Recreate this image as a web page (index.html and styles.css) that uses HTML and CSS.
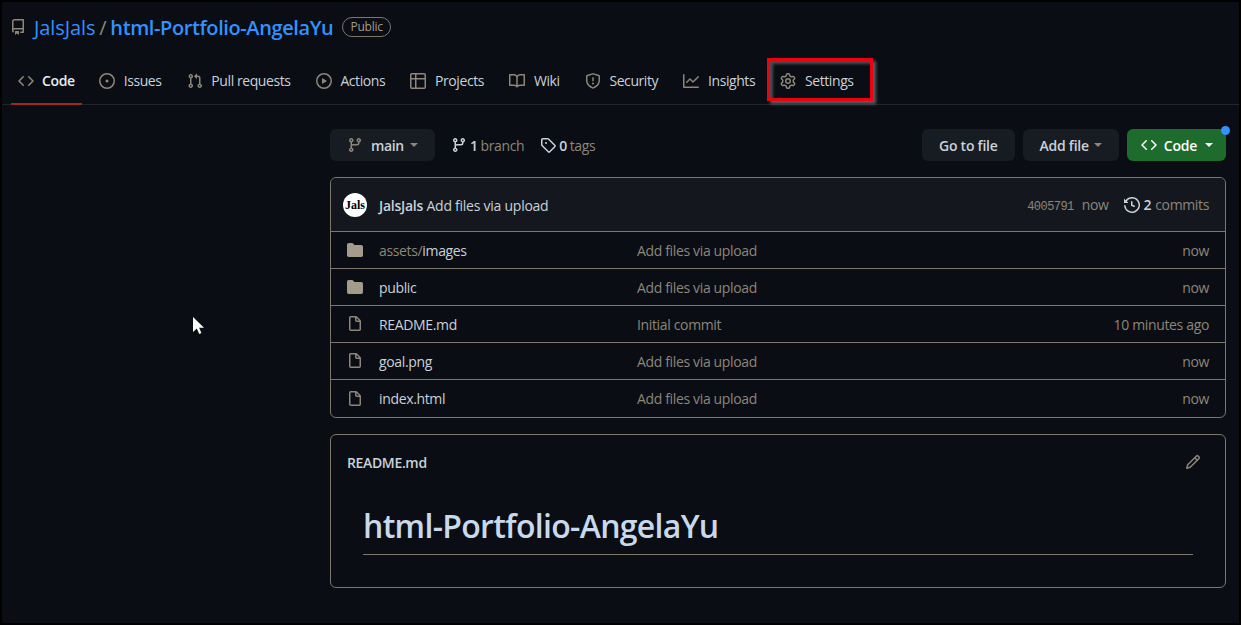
FILE: index.html
```html
<!DOCTYPE html>
<html lang="en">
<head>
    <meta charset="UTF-8">
    <meta name="viewport" content="width=device-width, initial-scale=1.0">
    <title>JalsJals/html-Portfolio-AngelaYu</title>
    <link rel="stylesheet" href="styles.css">
</head>
<body>
    <svg class="sprites" width="0" height="0">
        <symbol id="i-repo" viewBox="0 0 16 16"><path d="M2 2.5A2.5 2.5 0 014.5 0h8.75a.75.75 0 01.75.75v12.5a.75.75 0 01-.75.75h-2.5a.75.75 0 110-1.5h1.75v-2h-8a1 1 0 00-.714 1.7.75.75 0 01-1.072 1.05A2.495 2.495 0 012 11.5v-9zm10.5-1V9h-8c-.356 0-.694.074-1 .208V2.5a1 1 0 011-1h8zM5 12.25v3.25a.25.25 0 00.4.2l1.45-1.087a.25.25 0 01.3 0L8.6 15.7a.25.25 0 00.4-.2v-3.25a.25.25 0 00-.25-.25h-3.5a.25.25 0 00-.25.25z"/></symbol>
        <symbol id="i-code" viewBox="0 0 16 16"><path d="M4.72 3.22a.75.75 0 011.06 1.06L2.06 8l3.72 3.72a.75.75 0 11-1.06 1.06L.47 8.53a.75.75 0 010-1.06l4.25-4.25zm6.56 0a.75.75 0 10-1.06 1.06L13.94 8l-3.72 3.72a.75.75 0 101.06 1.06l4.25-4.25a.75.75 0 000-1.06l-4.25-4.25z"/></symbol>
        <symbol id="i-issue" viewBox="0 0 16 16"><path d="M8 9.5a1.5 1.5 0 100-3 1.5 1.5 0 000 3z"/><path d="M8 0a8 8 0 100 16A8 8 0 008 0zM1.5 8a6.5 6.5 0 1113 0 6.5 6.5 0 01-13 0z"/></symbol>
        <symbol id="i-pull" viewBox="0 0 16 16"><path d="M7.177 3.073L9.573.677A.25.25 0 0110 .854v4.792a.25.25 0 01-.427.177L7.177 3.427a.25.25 0 010-.354zM3.75 2.5a.75.75 0 100 1.5.75.75 0 000-1.5zm-2.25.75a2.25 2.25 0 113 2.122v5.256a2.251 2.251 0 11-1.5 0V5.372A2.25 2.25 0 011.5 3.25zM11 2.5h-1V4h1a1 1 0 011 1v5.628a2.251 2.251 0 101.5 0V5A2.5 2.5 0 0011 2.5zm1 10.25a.75.75 0 111.5 0 .75.75 0 01-1.5 0zM3.75 12a.75.75 0 100 1.5.75.75 0 000-1.5z"/></symbol>
        <symbol id="i-play" viewBox="0 0 16 16"><path d="M1.5 8a6.5 6.5 0 1113 0 6.5 6.5 0 01-13 0zM8 0a8 8 0 100 16A8 8 0 008 0zM6.379 5.227A.25.25 0 006 5.442v5.117a.25.25 0 00.379.214l4.264-2.559a.25.25 0 000-.428L6.379 5.227z"/></symbol>
        <symbol id="i-table" viewBox="0 0 16 16"><path d="M0 1.75C0 .784.784 0 1.75 0h12.5C15.216 0 16 .784 16 1.75v12.5A1.75 1.75 0 0114.25 16H1.75A1.75 1.75 0 010 14.25V1.75zM1.5 6.5v7.75c0 .138.112.25.25.25H5v-8H1.5zM5 5H1.5V1.75a.25.25 0 01.25-.25H5V5zm1.5 1.5v8h7.75a.25.25 0 00.25-.25V6.5h-8zm8-1.5h-8V1.5h7.75a.25.25 0 01.25.25V5z"/></symbol>
        <symbol id="i-book" viewBox="0 0 16 16"><path d="M0 1.75A.75.75 0 01.75 1h4.253c1.227 0 2.317.59 3 1.501A3.744 3.744 0 0111.006 1h4.245a.75.75 0 01.75.75v10.5a.75.75 0 01-.75.75h-4.507a2.25 2.25 0 00-1.591.659l-.622.621a.75.75 0 01-1.06 0l-.622-.621A2.25 2.25 0 005.258 13H.75a.75.75 0 01-.75-.75V1.75zm8.755 3a2.25 2.25 0 012.25-2.25H14.5v9h-3.757c-.71 0-1.4.201-1.992.572l.004-7.322zm-1.504 7.324l.004-5.073-.002-2.253A2.25 2.25 0 005.003 2.5H1.5v9h3.757a3.75 3.75 0 011.994.574z"/></symbol>
        <symbol id="i-shield" viewBox="0 0 16 16"><path d="M7.467.133a1.75 1.75 0 011.066 0l5.25 1.68A1.75 1.75 0 0115 3.48V7c0 1.566-.32 3.182-1.303 4.682-.983 1.498-2.585 2.813-5.032 3.855a1.7 1.7 0 01-1.33 0c-2.447-1.042-4.049-2.357-5.032-3.855C1.32 10.182 1 8.566 1 7V3.48a1.75 1.75 0 011.217-1.667l5.25-1.68zm.61 1.429a.25.25 0 00-.153 0l-5.25 1.68a.25.25 0 00-.174.238V7c0 1.358.275 2.666 1.057 3.86.784 1.194 2.121 2.34 4.366 3.297a.2.2 0 00.154 0c2.245-.956 3.582-2.104 4.366-3.298C13.225 9.666 13.5 8.36 13.5 7V3.48a.25.25 0 00-.174-.237l-5.25-1.68zM9 10.5a1 1 0 11-2 0 1 1 0 012 0zm-.25-5.75a.75.75 0 10-1.5 0v3a.75.75 0 001.5 0v-3z"/></symbol>
        <symbol id="i-graph" viewBox="0 0 16 16"><path d="M1.5 1.75a.75.75 0 00-1.5 0v12.5c0 .414.336.75.75.75h14.5a.75.75 0 000-1.5H1.5V1.750zm14.28 2.53a.75.75 0 00-1.06-1.06L10 7.94 7.53 5.47a.75.75 0 00-1.06 0L3.22 8.72a.75.75 0 001.06 1.06L7 7.06l2.47 2.47a.75.75 0 001.06 0l5.25-5.25z"/></symbol>
        <symbol id="i-gear" viewBox="0 0 16 16"><path d="M7.429 1.525a6.593 6.593 0 011.142 0c.036.003.108.036.137.146l.289 1.105c.147.56.55.967.997 1.189.174.086.341.183.501.29.417.278.97.423 1.53.27l1.102-.303c.11-.03.175.016.195.046.219.31.41.641.573.989.014.031.022.11-.059.19l-.815.806c-.411.406-.562.957-.53 1.456a4.588 4.588 0 010 .582c-.032.499.119 1.05.53 1.456l.815.806c.08.08.073.159.059.19a6.494 6.494 0 01-.573.99c-.02.029-.086.074-.195.045l-1.103-.303c-.559-.153-1.112-.008-1.529.27-.16.107-.327.204-.5.29-.449.222-.851.628-.998 1.189l-.289 1.105c-.029.11-.101.143-.137.146a6.613 6.613 0 01-1.142 0c-.036-.003-.108-.037-.137-.146l-.289-1.105c-.147-.56-.55-.967-.997-1.189a4.502 4.502 0 01-.501-.29c-.417-.278-.97-.423-1.53-.27l-1.102.303c-.11.03-.175-.016-.195-.046a6.492 6.492 0 01-.573-.989c-.014-.031-.022-.11.059-.19l.815-.806c.411-.406.562-.957.53-1.456a4.587 4.587 0 010-.582c.032-.499-.119-1.05-.53-1.456l-.815-.806c-.08-.08-.073-.159-.059-.19a6.44 6.44 0 01.573-.99c.02-.029.086-.075.195-.045l1.103.303c.559.153 1.112.008 1.529-.27.16-.107.327-.204.5-.29.449-.222.851-.628.998-1.189l.289-1.105c.029-.11.101-.143.137-.146zM8 0c-.236 0-.47.01-.701.03-.743.065-1.29.615-1.458 1.261l-.29 1.106c-.017.066-.078.158-.211.224a5.994 5.994 0 00-.668.386c-.123.082-.233.09-.3.071L3.27 2.776c-.644-.177-1.392.02-1.82.63a7.977 7.977 0 00-.704 1.217c-.315.675-.111 1.422.363 1.891l.815.806c.05.048.098.147.088.294a6.084 6.084 0 000 .772c.01.147-.038.246-.088.294l-.815.806c-.474.469-.678 1.216-.363 1.891.2.428.436.835.704 1.218.428.609 1.176.806 1.82.63l1.103-.303c.066-.019.176-.011.299.071.213.143.436.272.668.386.133.066.194.158.212.224l.289 1.106c.169.646.715 1.196 1.458 1.26a8.094 8.094 0 001.402 0c.743-.064 1.29-.614 1.458-1.26l.29-1.106c.017-.066.078-.158.211-.224a5.98 5.98 0 00.668-.386c.123-.082.233-.09.3-.071l1.102.302c.644.177 1.392-.02 1.82-.63.268-.382.505-.789.704-1.217.315-.675.111-1.422-.364-1.891l-.814-.806c-.05-.048-.098-.147-.088-.294a6.1 6.1 0 000-.772c-.01-.147.039-.246.088-.294l.814-.806c.475-.469.679-1.216.364-1.891a7.992 7.992 0 00-.704-1.218c-.428-.609-1.176-.806-1.82-.63l-1.103.303c-.066.019-.176.011-.299-.071a5.991 5.991 0 00-.668-.386c-.133-.066-.194-.158-.212-.224L10.16 1.29C9.99.645 9.444.095 8.701.031A8.094 8.094 0 008 0zm1.5 8a1.5 1.5 0 11-3 0 1.5 1.5 0 013 0zM11 8a3 3 0 11-6 0 3 3 0 016 0z"/></symbol>
        <symbol id="i-branch" viewBox="0 0 16 16"><path d="M11.75 2.5a.75.75 0 100 1.5.75.75 0 000-1.5zm-2.25.75a2.25 2.25 0 113 2.122V6A2.5 2.5 0 0110 8.5H6a1 1 0 00-1 1v1.128a2.251 2.251 0 11-1.5 0V5.372a2.25 2.25 0 111.5 0v1.836A2.492 2.492 0 016 7h4a1 1 0 001-1v-.628A2.25 2.25 0 019.5 3.25zM4.25 12a.75.75 0 100 1.5.75.75 0 000-1.5zM3.5 3.25a.75.75 0 111.5 0 .75.75 0 01-1.5 0z"/></symbol>
        <symbol id="i-tag" viewBox="0 0 16 16"><path d="M2.5 7.775V2.75a.25.25 0 01.25-.25h5.025a.25.25 0 01.177.073l6.25 6.25a.25.25 0 010 .354l-5.025 5.025a.25.25 0 01-.354 0l-6.25-6.25a.25.25 0 01-.073-.177zm-1.5 0V2.75C1 1.784 1.784 1 2.75 1h5.025c.464 0 .91.184 1.238.513l6.25 6.25a1.75 1.75 0 010 2.474l-5.026 5.026a1.75 1.75 0 01-2.474 0l-6.25-6.25A1.75 1.75 0 011 7.775zM6 5a1 1 0 100 2 1 1 0 000-2z"/></symbol>
        <symbol id="i-history" viewBox="0 0 16 16"><path d="M1.643 3.143L.427 1.927A.25.25 0 000 2.104V5.75c0 .138.112.25.25.25h3.646a.25.25 0 00.177-.427L2.715 4.215a6.5 6.5 0 11-1.18 4.458.75.75 0 10-1.493.154 8.001 8.001 0 101.6-5.684zM7.75 4a.75.75 0 01.75.75v2.992l2.028.812a.75.75 0 01-.557 1.392l-2.5-1A.75.75 0 017 8.25v-3.5A.75.75 0 017.75 4z"/></symbol>
        <symbol id="i-folder" viewBox="0 0 16 16"><path d="M1.75 1A1.75 1.75 0 000 2.75v10.5C0 14.216.784 15 1.75 15h12.5A1.75 1.75 0 0016 13.25v-8.5A1.75 1.75 0 0014.25 3H7.5a.25.25 0 01-.2-.1l-.9-1.2C6.07 1.26 5.55 1 5 1H1.75z"/></symbol>
        <symbol id="i-file" viewBox="0 0 16 16"><path d="M3.75 1.5a.25.25 0 00-.25.25v11.5c0 .138.112.25.25.25h8.5a.25.25 0 00.25-.25V6H9.75A1.75 1.75 0 018 4.25V1.5H3.75zm5.75.56v2.19c0 .138.112.25.25.25h2.19L9.5 2.06zM2 1.75C2 .784 2.784 0 3.75 0h5.086c.464 0 .909.184 1.237.513l3.414 3.414c.329.328.513.773.513 1.237v8.086A1.75 1.75 0 0112.25 15h-8.5A1.75 1.75 0 012 13.25V1.75z"/></symbol>
        <symbol id="i-pencil" viewBox="0 0 16 16"><path d="M11.013 1.427a1.75 1.75 0 012.474 0l1.086 1.086a1.75 1.75 0 010 2.474l-8.61 8.61c-.21.21-.47.364-.756.445l-3.251.93a.75.75 0 01-.927-.928l.929-3.25a1.75 1.75 0 01.445-.758l8.61-8.61zm1.414 1.06a.25.25 0 00-.354 0L10.811 3.75l1.439 1.44 1.263-1.263a.25.25 0 000-.354l-1.086-1.086zM11.189 6.25L9.75 4.81l-6.286 6.287a.25.25 0 00-.064.108l-.558 1.953 1.953-.558a.249.249 0 00.108-.064l6.286-6.286z"/></symbol>
    </svg>

    <div class="frame">
        <header class="repo-head">
            <div class="repo-title">
                <svg class="icon"><use href="#i-repo"/></svg>
                <a class="owner">JalsJals</a>
                <span class="slash">/</span>
                <a class="name">html-Portfolio-AngelaYu</a>
                <span class="badge">Public</span>
            </div>
            <nav class="tabs">
                <a class="tab active"><svg class="icon"><use href="#i-code"/></svg>Code</a>
                <a class="tab"><svg class="icon"><use href="#i-issue"/></svg>Issues</a>
                <a class="tab"><svg class="icon"><use href="#i-pull"/></svg>Pull requests</a>
                <a class="tab"><svg class="icon"><use href="#i-play"/></svg>Actions</a>
                <a class="tab"><svg class="icon"><use href="#i-table"/></svg>Projects</a>
                <a class="tab"><svg class="icon"><use href="#i-book"/></svg>Wiki</a>
                <a class="tab"><svg class="icon"><use href="#i-shield"/></svg>Security</a>
                <a class="tab"><svg class="icon"><use href="#i-graph"/></svg>Insights</a>
                <a class="tab settings"><svg class="icon"><use href="#i-gear"/></svg>Settings</a>
            </nav>
        </header>

        <main class="content">
            <div class="toolbar">
                <button class="btn branch-btn"><svg class="icon"><use href="#i-branch"/></svg><b>main</b><i class="caret"></i></button>
                <a class="stat first"><svg class="icon light"><use href="#i-branch"/></svg><b>1</b> branch</a>
                <a class="stat"><svg class="icon light"><use href="#i-tag"/></svg><b>0</b> tags</a>
                <div class="spacer"></div>
                <button class="btn">Go to file</button>
                <button class="btn">Add file<i class="caret"></i></button>
                <button class="btn green"><svg class="icon white"><use href="#i-code"/></svg>Code<i class="caret white"></i><span class="dot"></span></button>
            </div>

            <section class="box files">
                <div class="commit-row">
                    <span class="avatar">Jals</span>
                    <span class="commit-msg"><b>JalsJals</b> Add files via upload</span>
                    <span class="sha">4005791</span>
                    <span class="when">now</span>
                    <a class="commits"><svg class="icon light"><use href="#i-history"/></svg><b>2</b> commits</a>
                </div>
                <div class="file-row">
                    <svg class="icon folder"><use href="#i-folder"/></svg>
                    <span class="fname"><em>assets/</em>images</span>
                    <span class="fmsg">Add files via upload</span>
                    <span class="fage">now</span>
                </div>
                <div class="file-row">
                    <svg class="icon folder"><use href="#i-folder"/></svg>
                    <span class="fname">public</span>
                    <span class="fmsg">Add files via upload</span>
                    <span class="fage">now</span>
                </div>
                <div class="file-row">
                    <svg class="icon"><use href="#i-file"/></svg>
                    <span class="fname">README.md</span>
                    <span class="fmsg">Initial commit</span>
                    <span class="fage">10 minutes ago</span>
                </div>
                <div class="file-row">
                    <svg class="icon"><use href="#i-file"/></svg>
                    <span class="fname">goal.png</span>
                    <span class="fmsg">Add files via upload</span>
                    <span class="fage">now</span>
                </div>
                <div class="file-row">
                    <svg class="icon"><use href="#i-file"/></svg>
                    <span class="fname">index.html</span>
                    <span class="fmsg">Add files via upload</span>
                    <span class="fage">now</span>
                </div>
            </section>

            <section class="box readme">
                <div class="readme-head">
                    <b>README.md</b>
                    <svg class="icon"><use href="#i-pencil"/></svg>
                </div>
                <h1>html-Portfolio-AngelaYu</h1>
            </section>
        </main>

        <!-- annotation drawn over the screenshot -->
        <div class="highlight"></div>
        <svg class="cursor" width="14" height="20" viewBox="0 0 14 20"><path d="M1 1v15l3.800-3.400 2.400 5.400 2.200-1-2.300-5.200H12z" fill="#fff"/></svg>
    </div>
</body>
</html>
```

FILE: styles.css
```css
* {
    box-sizing: border-box;
}
html, body {
    margin: 0;
    height: 100%;
}
body {
    font-family: "Open Sans", "Noto Sans", sans-serif;
    font-size: 14px;
    letter-spacing: -0.35px;
    color: #c9d1d9;
    background: #000;
    overflow: hidden;
}
.sprites {
    position: absolute;
}
.frame {
    position: relative;
    height: 625px;
    border: 2px solid #000;
    background: #0a0d13;
}
.icon {
    display: block;
    flex: none;
    width: 16px;
    height: 16px;
    fill: #8d8679;
    fill-rule: evenodd;
}
.icon.light {
    fill: #c9d1d9;
}
.icon.white {
    fill: #fff;
}
.icon.folder {
    fill: #a39b8b;
}
b {
    font-weight: 600;
}

/* repo header */
.repo-head {
    height: 103px;
    border-bottom: 1px solid #21262d;
}
.repo-title {
    display: flex;
    align-items: center;
    height: 50px;
    padding-left: 8px;
    font-size: 20px;
    color: #3391ff;
}
.owner {
    margin-left: 8px;
    letter-spacing: -0.1px;
}
.slash {
    margin: 0 4px;
    color: #8d8679;
}
.name {
    font-weight: 600;
    letter-spacing: -0.4px;
}
.badge {
    margin-left: 9px;
    padding: 0 7px;
    height: 20px;
    line-height: 18px;
    font-size: 12px;
    font-weight: 500;
    letter-spacing: -0.2px;
    color: #a39b8b;
    border: 1px solid #7d766b;
    border-radius: 10px;
}
.tabs {
    display: flex;
    height: 53px;
    padding: 6px 0 0 9px;
    letter-spacing: -0.42px;
}
.tab {
    display: flex;
    align-items: center;
    gap: 8.85px;
    margin-right: 11px;
    padding: 0 7px;
    height: 47px;
    color: #c9d1d9;
    border-bottom: 2px solid transparent;
}
.tab.active {
    gap: 8px;
    margin-right: 10px;
    font-weight: 600;
    letter-spacing: -0.35px;
    color: #e6edf3;
    border-bottom-color: #a3281c;
}

/* main column */
.content {
    padding: 24px 13px 0 328px;
}
.toolbar {
    display: flex;
    align-items: center;
    gap: 8px;
    height: 32px;
}
.spacer {
    flex: 1;
}
.btn {
    position: relative;
    display: flex;
    align-items: center;
    height: 32px;
    padding: 0 17px;
    font: inherit;
    font-weight: 600;
    letter-spacing: -0.25px;
    color: #c9d1d9;
    background: #171b22;
    border: 0;
    border-radius: 6px;
}
.branch-btn {
    gap: 8px;
    width: 105px;
    margin-right: 8px;
    letter-spacing: -0.35px;
}
.btn.green {
    gap: 7px;
    padding: 0 13px 0 14px;
    color: #fff;
    background: #1d6b2d;
}
.caret {
    display: inline-block;
    margin-left: 5px;
    border: 4px solid transparent;
    border-top-color: #8d8679;
    border-bottom: 0;
}
.branch-btn .caret {
    margin-left: -2px;
}
.btn.green .caret {
    margin-left: 1px;
}
.caret.white {
    border-top-color: #fff;
}
.dot {
    position: absolute;
    top: -3px;
    right: -4px;
    width: 9px;
    height: 9px;
    background: #3391ff;
    border-radius: 50%;
}
.stat {
    display: flex;
    align-items: center;
    gap: 3px;
    margin-right: 8px;
    letter-spacing: -0.4px;
    color: #8d8679;
}
.stat b {
    color: #c9d1d9;
}

/* boxes */
.box {
    border: 1px solid #7d766b;
    border-radius: 6px;
}
.files {
    margin-top: 16px;
}
.commit-row {
    display: flex;
    align-items: center;
    height: 53px;
    padding: 0 16px 0 12px;
    background: #14181e;
    border-radius: 6px 6px 0 0;
}
.avatar {
    flex: none;
    width: 24px;
    height: 24px;
    margin-right: 12px;
    font: bold 12px/24px "Liberation Serif", serif;
    letter-spacing: 0;
    text-align: center;
    color: #000;
    background: #fff;
    border-radius: 50%;
}
.commit-msg {
    flex: 1;
    padding-top: 1px;
    letter-spacing: -0.25px;
}
.sha {
    margin-top: 4px;
    font: 12px "Liberation Mono", monospace;
    letter-spacing: -0.55px;
    color: #8d8679;
}
.when {
    margin-left: 8px;
    color: #8d8679;
}
.commits {
    display: flex;
    align-items: center;
    gap: 4px;
    margin-left: 15px;
    color: #8d8679;
}
.commits b {
    color: #c9d1d9;
}
.file-row {
    display: flex;
    align-items: center;
    height: 37px;
    padding: 0 16px;
    border-top: 1px solid #7d766b;
}
.file-row:last-child {
    height: 38px;
}
.fname {
    width: 258px;
    margin-left: 16px;
}
.fname em {
    font-style: normal;
    color: #8d8679;
}
.fmsg {
    flex: 1;
    color: #8d8679;
}
.fage {
    color: #8d8679;
}
.readme {
    height: 154px;
    margin-top: 16px;
    padding: 0 32px;
}
.readme-head {
    display: flex;
    align-items: center;
    justify-content: space-between;
    height: 54px;
    margin: 0 -16px;
    padding-right: 8px;
}
.readme h1 {
    margin: 12px 0 0;
    height: 54px;
    font-size: 32px;
    font-weight: 600;
    letter-spacing: -0.7px;
    line-height: 50px;
    color: #c9d9ec;
    border-bottom: 1px solid #7d766b;
}

/* overlays */
.highlight {
    position: absolute;
    top: 56px;
    left: 765px;
    width: 106px;
    height: 43px;
    border: 3px solid #ee0010;
    box-shadow: 3px 3px 3px rgba(120, 120, 120, 0.75), inset 3px 3px 3px rgba(120, 120, 120, 0.6);
}
.cursor {
    position: absolute;
    top: 314px;
    left: 190px;
}
```
